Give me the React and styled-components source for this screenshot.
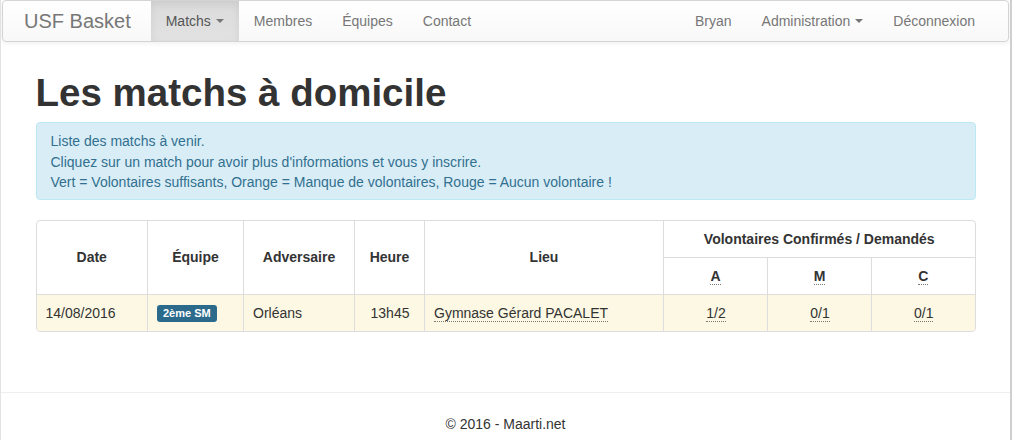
import React from "react";
import styled, { createGlobalStyle } from "styled-components";

const GlobalStyle = createGlobalStyle`
  html, body {
    margin: 0;
    padding: 0;
    background: #fff;
  }
  body {
    font-family: "Liberation Sans", Arial, Helvetica, sans-serif;
    font-size: 14px;
    line-height: 20px;
    color: #333;
  }
  * {
    box-sizing: border-box;
  }
`;

const Frame = styled.div`
  width: 1012px;
  height: 440px;
  overflow: hidden;
  border-left: 1px solid #e3e3e3;
  border-right: 2px solid #cfcfcf;
`;

const Navbar = styled.nav`
  margin: 0 0 0 1px;
  width: 1007px;
  height: 42px;
  display: flex;
  justify-content: space-between;
  align-items: stretch;
  padding: 0 18px 0 6px;
  border: 1px solid #d4d4d4;
  border-radius: 4px;
  background-image: linear-gradient(to bottom, #fff 0, #f8f8f8 100%);
  box-shadow: inset 0 1px 0 rgba(255, 255, 255, 0.15), 0 1px 5px rgba(0, 0, 0, 0.075);
`;

const NavGroup = styled.ul`
  list-style: none;
  margin: 0;
  padding: 0;
  display: flex;
  align-items: stretch;
`;

const Brand = styled.a`
  display: flex;
  align-items: center;
  padding: 0 15px;
  margin-right: 5px;
  font-size: 20px;
  color: #777;
  text-decoration: none;
`;

const NavLink = styled.a`
  display: flex;
  align-items: center;
  padding: 0 15px;
  color: ${(p) => (p.$active ? "#555" : "#777")};
  text-decoration: none;
  background-image: ${(p) =>
    p.$active ? "linear-gradient(to bottom, #dbdbdb 0, #e2e2e2 100%)" : "none"};
  box-shadow: ${(p) => (p.$active ? "inset 0 3px 9px rgba(0, 0, 0, 0.075)" : "none")};
`;

const Caret = styled.span`
  display: inline-block;
  width: 0;
  height: 0;
  margin-left: 5px;
  border-top: 4px solid #777;
  border-left: 4px solid transparent;
  border-right: 4px solid transparent;
`;

const Container = styled.main`
  width: 970px;
  margin: 0 auto;
  padding: 0 15px;
`;

const Title = styled.h1`
  margin: 30px 0 8px;
  font-size: 38.5px;
  line-height: 42px;
  font-weight: 700;
  color: #333;
`;

const Alert = styled.div`
  padding: 8px 14px 6px;
  border: 1px solid #bce8f1;
  border-radius: 4px;
  background: #d9edf7;
  color: #31708f;
  line-height: 20.5px;
  margin-bottom: 20px;
`;

const TablePanel = styled.div`
  border: 1px solid #ddd;
  border-radius: 4px;
  overflow: hidden;
`;

const Table = styled.table`
  width: 100%;
  border-collapse: collapse;
  border-style: hidden;
`;

const Th = styled.th`
  padding: 8px;
  border: 1px solid #ddd;
  font-weight: 700;
  text-align: center;
  vertical-align: middle;
  line-height: 20px;
`;

const Td = styled.td`
  padding: 8px 8px 8px 9px;
  border: 1px solid #ddd;
  background: #fcf8e3;
  line-height: 20px;
  text-align: ${(p) => (p.$center ? "center" : "left")};
`;

const Abbr = styled.abbr`
  text-decoration: none;
  border-bottom: 1px dotted #777;
  cursor: help;
`;

const TeamLabel = styled.span`
  display: inline-block;
  padding: 2px 6px 3px;
  font-size: 11px;
  font-weight: 700;
  line-height: 12px;
  color: #fff;
  background: #2b6a8b;
  border-radius: 3px;
  vertical-align: 1px;
`;

const Footer = styled.footer`
  margin-top: 60px;
  border-top: 1px solid #eee;
  padding-top: 21px;
  text-align: center;
  color: #333;
`;

const columns = [
  { label: "Date", width: 111 },
  { label: "Équipe", width: 96 },
  { label: "Adversaire", width: 111 },
  { label: "Heure", width: 70 },
  { label: "Lieu", width: 239 },
];

export default function App() {
  return (
    <>
      <GlobalStyle />
      <Frame>
        <Navbar>
          <NavGroup>
            <Brand href="#">USF Basket</Brand>
            <NavLink href="#" $active>
              Matchs <Caret />
            </NavLink>
            <NavLink href="#">Membres</NavLink>
            <NavLink href="#">Équipes</NavLink>
            <NavLink href="#">Contact</NavLink>
          </NavGroup>
          <NavGroup>
            <NavLink href="#">Bryan</NavLink>
            <NavLink href="#">
              Administration <Caret />
            </NavLink>
            <NavLink href="#">Déconnexion</NavLink>
          </NavGroup>
        </Navbar>

        <Container>
          <Title>Les matchs à domicile</Title>
          <Alert>
            Liste des matchs à venir.
            <br />
            Cliquez sur un match pour avoir plus d'informations et vous y inscrire.
            <br />
            Vert = Volontaires suffisants, Orange = Manque de volontaires, Rouge = Aucun volontaire !
          </Alert>

          <TablePanel>
            <Table>
              <thead>
                <tr>
                  {columns.map((c) => (
                    <Th key={c.label} rowSpan={2} style={{ width: c.width }}>
                      {c.label}
                    </Th>
                  ))}
                  <Th colSpan={3}>Volontaires Confirmés / Demandés</Th>
                </tr>
                <tr>
                  <Th style={{ width: 104 }}>
                    <Abbr title="Arbitres">A</Abbr>
                  </Th>
                  <Th style={{ width: 104 }}>
                    <Abbr title="Marqueurs">M</Abbr>
                  </Th>
                  <Th>
                    <Abbr title="Chronométreurs">C</Abbr>
                  </Th>
                </tr>
              </thead>
              <tbody>
                <tr>
                  <Td>14/08/2016</Td>
                  <Td>
                    <TeamLabel>2ème SM</TeamLabel>
                  </Td>
                  <Td>Orléans</Td>
                  <Td $center>13h45</Td>
                  <Td>
                    <Abbr title="Adresse du gymnase">Gymnase Gérard PACALET</Abbr>
                  </Td>
                  <Td $center>
                    <Abbr title="Arbitres">1/2</Abbr>
                  </Td>
                  <Td $center>
                    <Abbr title="Marqueurs">0/1</Abbr>
                  </Td>
                  <Td $center>
                    <Abbr title="Chronométreurs">0/1</Abbr>
                  </Td>
                </tr>
              </tbody>
            </Table>
          </TablePanel>
        </Container>

        <Footer>© 2016 - Maarti.net</Footer>
      </Frame>
    </>
  );
}
